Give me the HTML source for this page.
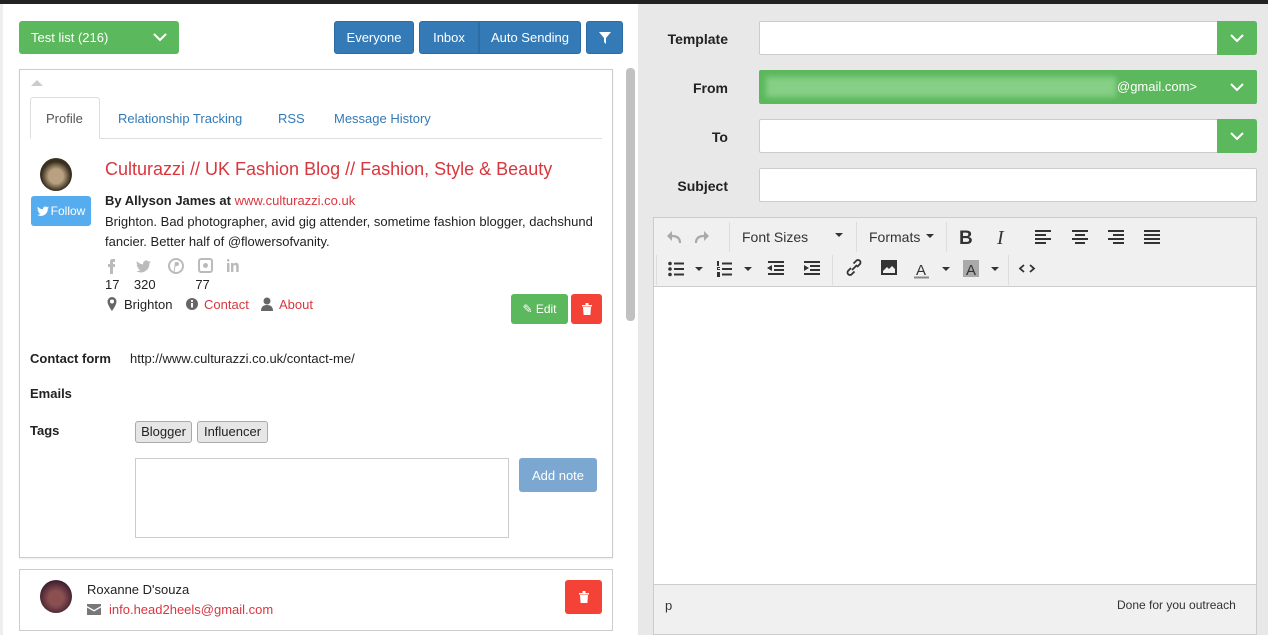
<!DOCTYPE html>
<html><head><meta charset="utf-8"><style>
*{box-sizing:border-box;margin:0;padding:0}
body{width:1268px;height:635px;overflow:hidden;font-family:"Liberation Sans",sans-serif;font-size:13px;color:#222;background:#fff;position:relative}
.a{position:absolute}
.btn{position:absolute;color:#fff;border-radius:3px;display:flex;align-items:center;justify-content:center;font-size:13px}
.blue{background:#337ab7;border:1px solid #2e6da4}
.red{color:#d9363e}
.lbl{position:absolute;font-weight:bold;font-size:14px;color:#222;text-align:right;width:100px}
.inp{position:absolute;left:759px;width:498px;height:34px;background:#fff;border:1px solid #ccc;border-radius:2px}
.dd{position:absolute;right:-1px;top:-1px;width:40px;height:34px;background:#5cb85c;border-radius:0 3px 3px 0;display:flex;align-items:center;justify-content:center}
.tb{position:absolute;color:#333;font-size:14px}
.sep{position:absolute;width:1px;height:30px;background:#ddd}
</style></head><body>
<div class="a" style="left:0;top:0;width:1268px;height:4px;background:#222"></div>
<div class="a" style="left:638px;top:4px;width:630px;height:631px;background:#e8e8e8"></div>
<div class="a" style="left:0;top:4px;width:3px;height:631px;background:#eee"></div>
<div class="btn" style="left:19px;top:21px;width:160px;height:33px;background:#5cb85c;justify-content:space-between;padding:0 12px"><span>Test list (216)</span><svg width="14" height="9"><path d="M1 1l6 6 6-6" stroke="#fff" stroke-width="2" fill="none"/></svg></div>
<div class="btn blue" style="left:334px;top:21px;width:80px;height:33px">Everyone</div>
<div class="btn blue" style="left:419px;top:21px;width:60px;height:33px;border-radius:3px 0 0 3px">Inbox</div>
<div class="btn blue" style="left:479px;top:21px;width:102px;height:33px;border-radius:0 3px 3px 0">Auto Sending</div>
<div class="btn blue" style="left:586px;top:21px;width:37px;height:33px"><svg width="12" height="12"><path d="M0 0h12L7 6v6L5 10V6z" fill="#fff"/></svg></div>
<div class="a" style="left:626px;top:68px;width:9px;height:253px;background:#c1c1c1;border-radius:4px"></div>
<div class="a" style="left:19px;top:69px;width:594px;height:489px;border:1px solid #ccc;box-shadow:0 1px 2px rgba(0,0,0,.08)"></div>
<div class="a" style="left:31px;top:80px;width:0;height:0;border-left:6px solid transparent;border-right:6px solid transparent;border-bottom:6px solid #ccc"></div>
<div class="a" style="left:30px;top:138px;width:572px;height:1px;background:#ddd"></div>
<div class="a" style="left:30px;top:97px;width:70px;height:42px;border:1px solid #ddd;border-bottom:1px solid #fff;background:#fff;border-radius:3px 3px 0 0"></div>
<div class="a" style="left:46px;top:111px;color:#555">Profile</div>
<div class="a" style="left:118px;top:111px;color:#337ab7">Relationship Tracking</div>
<div class="a" style="left:278px;top:111px;color:#337ab7">RSS</div>
<div class="a" style="left:334px;top:111px;color:#337ab7">Message History</div>
<div class="a" style="left:40px;top:158px;width:32px;height:33px;border-radius:50%;background:radial-gradient(circle at 50% 55%,#b8a080 0 30%,#3a3020 60%)"></div>
<div class="btn" style="left:31px;top:196px;width:60px;height:30px;background:#55acee;font-size:12px"><svg width="12" height="10" style="margin-right:2px"><path d="M12 1.5c-.5.2-1 .3-1.4.4.5-.3.9-.8 1.1-1.4-.5.3-1 .5-1.6.6A2.5 2.5 0 006 3.3 7 7 0 01.9.7a2.5 2.5 0 00.8 3.3c-.4 0-.8-.1-1.1-.3 0 1.2.9 2.2 2 2.4-.4.1-.8.1-1.1 0 .3 1 1.2 1.7 2.3 1.7A5 5 0 010 8.8 7 7 0 0010.8 2.9v-.3c.5-.3.9-.7 1.2-1.1z" fill="#fff"/></svg>Follow</div>
<div class="a red" style="left:105px;top:159px;font-size:18px">Culturazzi // UK Fashion Blog // Fashion, Style &amp; Beauty</div>
<div class="a" style="left:105px;top:193px"><b>By Allyson James at</b> <span class="red">www.culturazzi.co.uk</span></div>
<div class="a" style="left:105px;top:212px;width:500px;line-height:20px">Brighton. Bad photographer, avid gig attender, sometime fashion blogger, dachshund fancier. Better half of @flowersofvanity.</div>
<svg class="a" style="left:105px;top:257px" width="140" height="18" fill="#bbb">
<path d="M7 2h3v3H8v2h2v3H8v7H5v-7H3V7h2V5c0-2 1-3 2-3z"/>
<path d="M46 5c-.6.3-1.2.4-1.8.5.6-.4 1.1-1 1.3-1.7-.6.4-1.3.6-2 .8a3 3 0 00-5.2 2.8A8.8 8.8 0 0132 4.2a3 3 0 001 4c-.5 0-1-.2-1.4-.4 0 1.5 1 2.7 2.5 3-.5.1-1 .1-1.4 0 .4 1.2 1.5 2.1 2.9 2.1A6 6 0 0131 14a8.7 8.7 0 0013.4-7.800z"/>
<circle cx="71" cy="9" r="7" fill="none" stroke="#bbb" stroke-width="2"/><path d="M70 5h2a2 2 0 010 4h-1.5l-1 6h-1z"/>
<rect x="94" y="2" width="13" height="13" rx="2" fill="none" stroke="#bbb" stroke-width="2"/><circle cx="100.5" cy="8.5" r="2.5"/>
<path d="M122 6h2.5v9H122zM123.2 2a1.3 1.3 0 110 2.6 1.3 1.3 0 010-2.6zM126 6h2.4v1.2c.4-.8 1.3-1.4 2.5-1.4 2.3 0 2.8 1.5 2.8 3.5V15h-2.5v-5c0-1.2-.3-2-1.3-2s-1.5.8-1.5 2v5H126z"/>
</svg>
<div class="a" style="left:105px;top:277px">17 &nbsp;&nbsp; 320 &nbsp;&nbsp;&nbsp;&nbsp;&nbsp;&nbsp;&nbsp;&nbsp;&nbsp; 77</div>
<svg class="a" style="left:107px;top:297px" width="220" height="16" fill="#666">
<path d="M5 0a4.5 4.5 0 014.5 4.5C9.5 8 5 14 5 14S.5 8 .5 4.5A4.5 4.5 0 015 0zm0 2.5a2 2 0 100 4 2 2 0 000-4z"/>
<circle cx="85" cy="7" r="6"/><rect x="84" y="6" width="2" height="4.5" fill="#fff"/><circle cx="85" cy="4" r="1.1" fill="#fff"/>
<circle cx="160" cy="4" r="3.5"/><path d="M154 14c0-4 2-6 6-6s6 2 6 6z"/>
</svg>
<div class="a" style="left:124px;top:297px">Brighton</div>
<div class="a red" style="left:204px;top:297px">Contact</div>
<div class="a red" style="left:279px;top:297px">About</div>
<div class="btn" style="left:511px;top:294px;width:57px;height:30px;background:#5cb85c;font-size:12px">✎ Edit</div>
<div class="btn" style="left:571px;top:294px;width:31px;height:30px;background:#f44336"><svg width="10" height="12" fill="#fff"><path d="M0 2h10v1.5H0zM3.5 0h3v2h-3zM1 4h8l-.6 8H1.6z"/></svg></div>
<div class="a" style="left:30px;top:351px;font-weight:bold">Contact form</div>
<div class="a" style="left:130px;top:351px">http://www.culturazzi.co.uk/contact-me/</div>
<div class="a" style="left:30px;top:386px;font-weight:bold">Emails</div>
<div class="a" style="left:30px;top:423px;font-weight:bold">Tags</div>
<div class="a" style="left:135px;top:421px;width:57px;height:22px;background:#e6e6e6;border:1px solid #aaa;border-radius:3px;text-align:center;line-height:20px">Blogger</div>
<div class="a" style="left:197px;top:421px;width:71px;height:22px;background:#e6e6e6;border:1px solid #aaa;border-radius:3px;text-align:center;line-height:20px">Influencer</div>
<div class="a" style="left:135px;top:458px;width:374px;height:80px;border:1px solid #ccc"></div>
<div class="btn" style="left:519px;top:458px;width:78px;height:34px;background:#7ba7d0">Add note</div>
<div class="a" style="left:19px;top:569px;width:594px;height:62px;border:1px solid #ccc"></div>
<div class="a" style="left:40px;top:580px;width:32px;height:33px;border-radius:50%;background:radial-gradient(circle at 50% 55%,#8a5050 0 30%,#402030 70%)"></div>
<div class="a" style="left:87px;top:582px">Roxanne D'souza</div>
<svg class="a" style="left:87px;top:604px" width="14" height="11" fill="#777"><path d="M0 0h14v2L7 6 0 2zM0 3.5l7 4 7-4V11H0z"/></svg>
<div class="a red" style="left:109px;top:602px">info.head2heels@gmail.com</div>
<div class="btn" style="left:565px;top:580px;width:37px;height:34px;background:#f44336"><svg width="10" height="12" fill="#fff"><path d="M0 2h10v1.5H0zM3.5 0h3v2h-3zM1 4h8l-.6 8H1.6z"/></svg></div>
<div class="lbl" style="left:628px;top:31px">Template</div>
<div class="lbl" style="left:628px;top:80px">From</div>
<div class="lbl" style="left:628px;top:129px">To</div>
<div class="lbl" style="left:628px;top:178px">Subject</div>
<div class="inp" style="top:21px"><div class="dd"><svg width="14" height="9"><path d="M1 1l6 6 6-6" stroke="#fff" stroke-width="2" fill="none"/></svg></div></div>
<div class="inp" style="top:70px;background:#5cb85c;border-color:#5cb85c"><div class="a" style="left:6px;top:6px;width:350px;height:20px;background:#86cf86;filter:blur(3px)"></div><div class="a" style="left:357px;top:8px;color:#fff">@gmail.com&gt;</div><div class="dd"><svg width="14" height="9"><path d="M1 1l6 6 6-6" stroke="#fff" stroke-width="2" fill="none"/></svg></div></div>
<div class="inp" style="top:119px"><div class="dd"><svg width="14" height="9"><path d="M1 1l6 6 6-6" stroke="#fff" stroke-width="2" fill="none"/></svg></div></div>
<div class="inp" style="top:168px"></div>
<div class="a" style="left:653px;top:217px;width:604px;height:418px;border:1px solid #ccc;background:#f0f0f0"></div>
<div class="a" style="left:654px;top:286px;width:602px;height:299px;background:#fff;border-top:1px solid #ccc;border-bottom:1px solid #ccc"></div>
<div class="sep" style="left:729px;top:222px"></div>
<div class="tb" style="left:742px;top:229px">Font Sizes</div>
<div class="sep" style="left:856px;top:222px"></div>
<div class="tb" style="left:869px;top:229px">Formats</div>
<div class="sep" style="left:946px;top:222px"></div>
<div class="sep" style="left:656px;top:255px"></div>
<div class="sep" style="left:800px;top:255px;left:800px;display:none"></div>
<div class="sep" style="left:832px;top:255px"></div>
<div class="sep" style="left:1008px;top:255px"></div>
<svg class="a" style="left:654px;top:218px" width="602" height="68">
<g fill="none" stroke="#aaa" stroke-width="2.2"><path d="M26 25c0-5-3-7-8-7h-4"/><path d="M42 25c0-5 3-7 8-7h4"/></g>
<g fill="#aaa"><path d="M13 18l5-5v10z"/><path d="M55 18l-5-5v10z"/></g>
<g fill="#333">
<path d="M181 15h8l-4 4z"/><path d="M272 16h8l-4 4z"/>
<text x="305" y="26" font-family="Liberation Sans" font-weight="bold" font-size="19">B</text>
<text x="343" y="26" font-family="Liberation Serif" font-style="italic" font-size="20">I</text>
<path d="M381 12h16v2h-16zM381 16h11v2h-11zM381 20h16v2h-16zM381 24h11v2h-11z"/>
<path d="M418 12h16v2h-16zM421 16h10v2h-10zM418 20h16v2h-16zM421 24h10v2h-10z"/>
<path d="M454 12h16v2h-16zM459 16h11v2h-11zM454 20h16v2h-16zM459 24h11v2h-11z"/>
<path d="M490 12h16v2h-16zM490 16h16v2h-16zM490 20h16v2h-16zM490 24h16v2h-16z"/>
<circle cx="16" cy="45.5" r="1.8"/><circle cx="16" cy="51" r="1.8"/><circle cx="16" cy="56.5" r="1.8"/>
<path d="M20 44.5h10v2H20zM20 50h10v2H20zM20 55.5h10v2H20z"/><path d="M41 49h8l-4 4z"/>
<path d="M63 43h2v5h-2zM63 49h3v1h-2v1h2v1h-3zM63 54h3v5h-3z"/>
<path d="M68 44.5h10v2H68zM68 50h10v2H68zM68 55.5h10v2H68z"/><path d="M90 49h8l-4 4z"/>
<path d="M114 43h16v2h-16zM120 47h10v2h-10zM120 51h10v2h-10zM114 55h16v2h-16zM113 50l5-3v6z"/>
<path d="M150 43h16v2h-16zM156 47h10v2h-10zM156 51h10v2h-10zM150 55h16v2h-16zM155 50l-5-3v6z"/>
<path d="M227 42h16v15h-16zm2 2v11h12v-4l-3-3-3 3-2-2-4 4z" fill-rule="evenodd"/>
<text x="262" y="57" font-family="Liberation Sans" font-size="15">A</text><rect x="260" y="58.5" width="15" height="2" fill="#888"/><path d="M288 49h8l-4 4z"/>
<rect x="309" y="42" width="16" height="17" fill="#aaa"/><text x="312" y="57" font-family="Liberation Sans" font-size="15">A</text><path d="M337 49h8l-4 4z"/>
</g>
<g fill="none" stroke="#333" stroke-width="1.8">
<path d="M197 50l-3 3a2.5 2.5 0 003.5 3.5l3-3M203 49l3-3a2.5 2.5 0 00-3.5-3.5l-3 3M198 52l5-5"/>
<path d="M370 47l-4 3.5 4 3.5M376 47l4 3.5-4 3.5"/>
</g>
</svg>
<div class="a" style="left:665px;top:598px;color:#333">p</div>
<div class="a" style="left:1117px;top:598px;color:#333;font-size:12px">Done for you outreach</div>
</body></html>
